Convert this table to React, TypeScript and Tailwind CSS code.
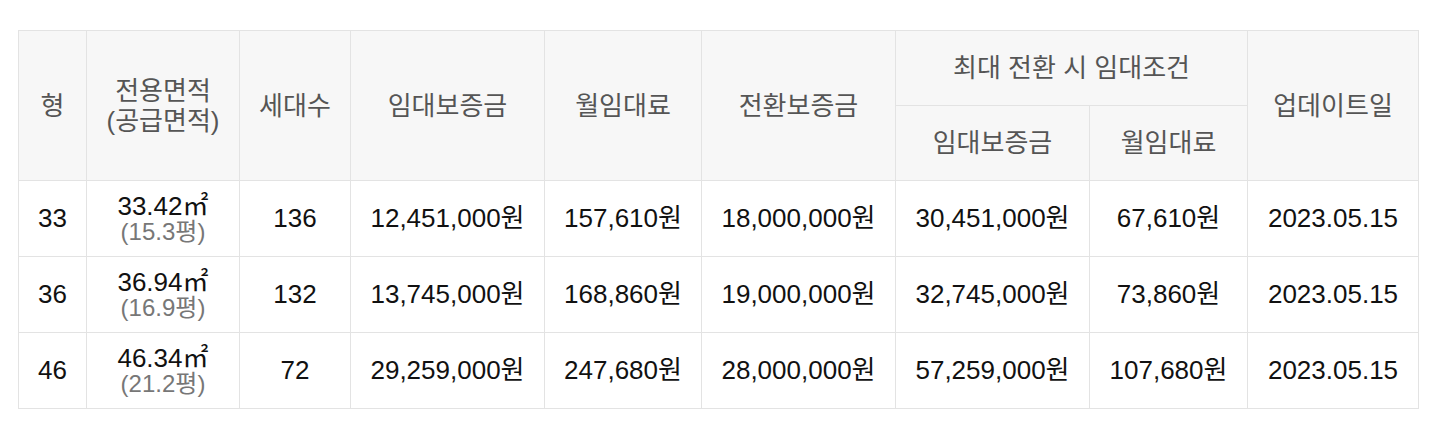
import React from 'react'

const rows = [
  { type: '33', area: '33.42', py: '15.3', units: '136', deposit: '12,451,000원', rent: '157,610원', conv: '18,000,000원', maxDeposit: '30,451,000원', maxRent: '67,610원', date: '2023.05.15' },
  { type: '36', area: '36.94', py: '16.9', units: '132', deposit: '13,745,000원', rent: '168,860원', conv: '19,000,000원', maxDeposit: '32,745,000원', maxRent: '73,860원', date: '2023.05.15' },
  { type: '46', area: '46.34', py: '21.2', units: '72', deposit: '29,259,000원', rent: '247,680원', conv: '28,000,000원', maxDeposit: '57,259,000원', maxRent: '107,680원', date: '2023.05.15' },
]

const th = 'border border-[#e3e3e3] bg-[#f7f7f7] font-normal text-[#555] text-[26px] leading-[30px] text-center align-middle'
const td = 'border border-[#e3e3e3] text-[#111] text-[26px] text-center align-middle'

function App() {
  return (
    <div className="bg-white w-[1431px] h-[426px] pt-[30px] pl-[18px] font-['Liberation_Sans','Noto_Sans_CJK_KR',sans-serif]">
      <table className="table-fixed border-collapse w-[1400px]">
        <colgroup>
          <col className="w-[68px]" />
          <col className="w-[153px]" />
          <col className="w-[111px]" />
          <col className="w-[194px]" />
          <col className="w-[157px]" />
          <col className="w-[194px]" />
          <col className="w-[194px]" />
          <col className="w-[158px]" />
          <col className="w-[171px]" />
        </colgroup>
        <thead>
          <tr className="h-[75px]">
            <th rowSpan={2} className={th}>형</th>
            <th rowSpan={2} className={th}>
              전용면적
              <br />
              (공급면적)
            </th>
            <th rowSpan={2} className={th}>세대수</th>
            <th rowSpan={2} className={th}>임대보증금</th>
            <th rowSpan={2} className={th}>월임대료</th>
            <th rowSpan={2} className={th}>전환보증금</th>
            <th colSpan={2} className={th}>최대 전환 시 임대조건</th>
            <th rowSpan={2} className={th}>업데이트일</th>
          </tr>
          <tr className="h-[75px]">
            <th className={th}>임대보증금</th>
            <th className={th}>월임대료</th>
          </tr>
        </thead>
        <tbody>
          {rows.map((r) => (
            <tr key={r.type} className="h-[76px]">
              <td className={td}>{r.type}</td>
              <td className={td}>
                <div className="leading-[26px]">{r.area}㎡</div>
                <div className="leading-[26px] text-[#777] text-[24px]">({r.py}평)</div>
              </td>
              <td className={td}>{r.units}</td>
              <td className={td}>{r.deposit}</td>
              <td className={td}>{r.rent}</td>
              <td className={td}>{r.conv}</td>
              <td className={td}>{r.maxDeposit}</td>
              <td className={td}>{r.maxRent}</td>
              <td className={td}>{r.date}</td>
            </tr>
          ))}
        </tbody>
      </table>
    </div>
  )
}

export default App
